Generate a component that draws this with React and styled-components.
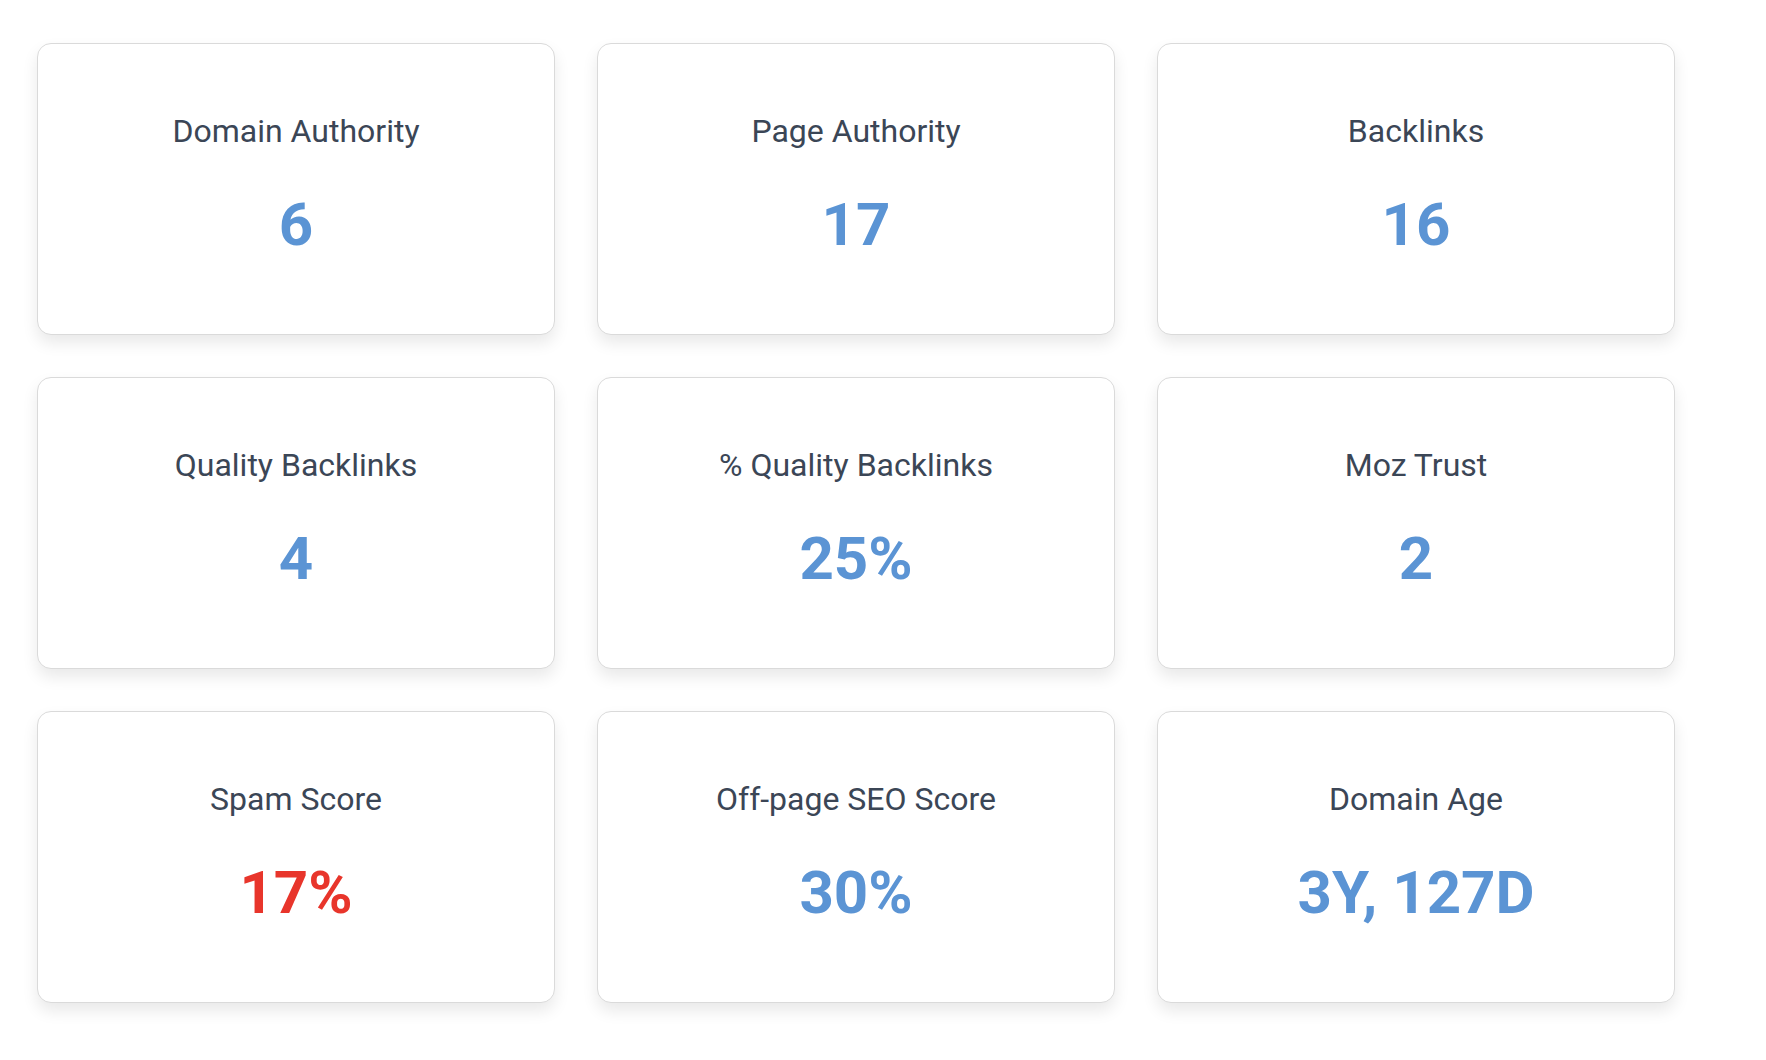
import React from 'react'
import styled, { createGlobalStyle } from 'styled-components'

const GlobalStyle = createGlobalStyle`
    *{
        box-sizing: border-box;
    }
    body{
        margin: 0;
        background: #fff;
        font-family: Roboto, "Liberation Sans", sans-serif;
    }
`;

const stats = [
    { label: 'Domain Authority', value: '6' },
    { label: 'Page Authority', value: '17' },
    { label: 'Backlinks', value: '16' },
    { label: 'Quality Backlinks', value: '4' },
    { label: '% Quality Backlinks', value: '25%' },
    { label: 'Moz Trust', value: '2' },
    { label: 'Spam Score', value: '17%', danger: true },
    { label: 'Off-page SEO Score', value: '30%' },
    { label: 'Domain Age', value: '3Y, 127D' },
];

function App() {
    return (
        <>
            <GlobalStyle />
            <StatsGrid>
                {stats.map((s) => (
                    <StatCard key={s.label}>
                        <StatLabel>{s.label}</StatLabel>
                        <StatValue $danger={s.danger}>{s.value}</StatValue>
                    </StatCard>
                ))}
            </StatsGrid>
        </>
    )
}

const StatsGrid = styled.div`
    display: grid;
    grid-template-columns: repeat(3, 518px);
    grid-auto-rows: 292px;
    gap: 42px;
    padding: 43px 0 57px 37px;
    min-height: 100vh;
    align-content: start;
`;

const StatCard = styled.div`
    display: flex;
    flex-direction: column;
    align-items: center;
    background: #fff;
    border: 1px solid #dadada;
    border-radius: 14px;
    box-shadow: 0px 8px 16px rgba(0, 0, 0, 0.09);
    padding-top: 71px;
`;

const StatLabel = styled.div`
    font-size: 32px;
    line-height: 1;
    font-weight: 400;
    color: #3b4656;
`;

const StatValue = styled.div`
    margin-top: 48px;
    font-size: 60px;
    line-height: 1;
    font-weight: 700;
    color: ${(p) => (p.$danger ? '#e8352b' : '#5b94d4')};
`;

export default App
